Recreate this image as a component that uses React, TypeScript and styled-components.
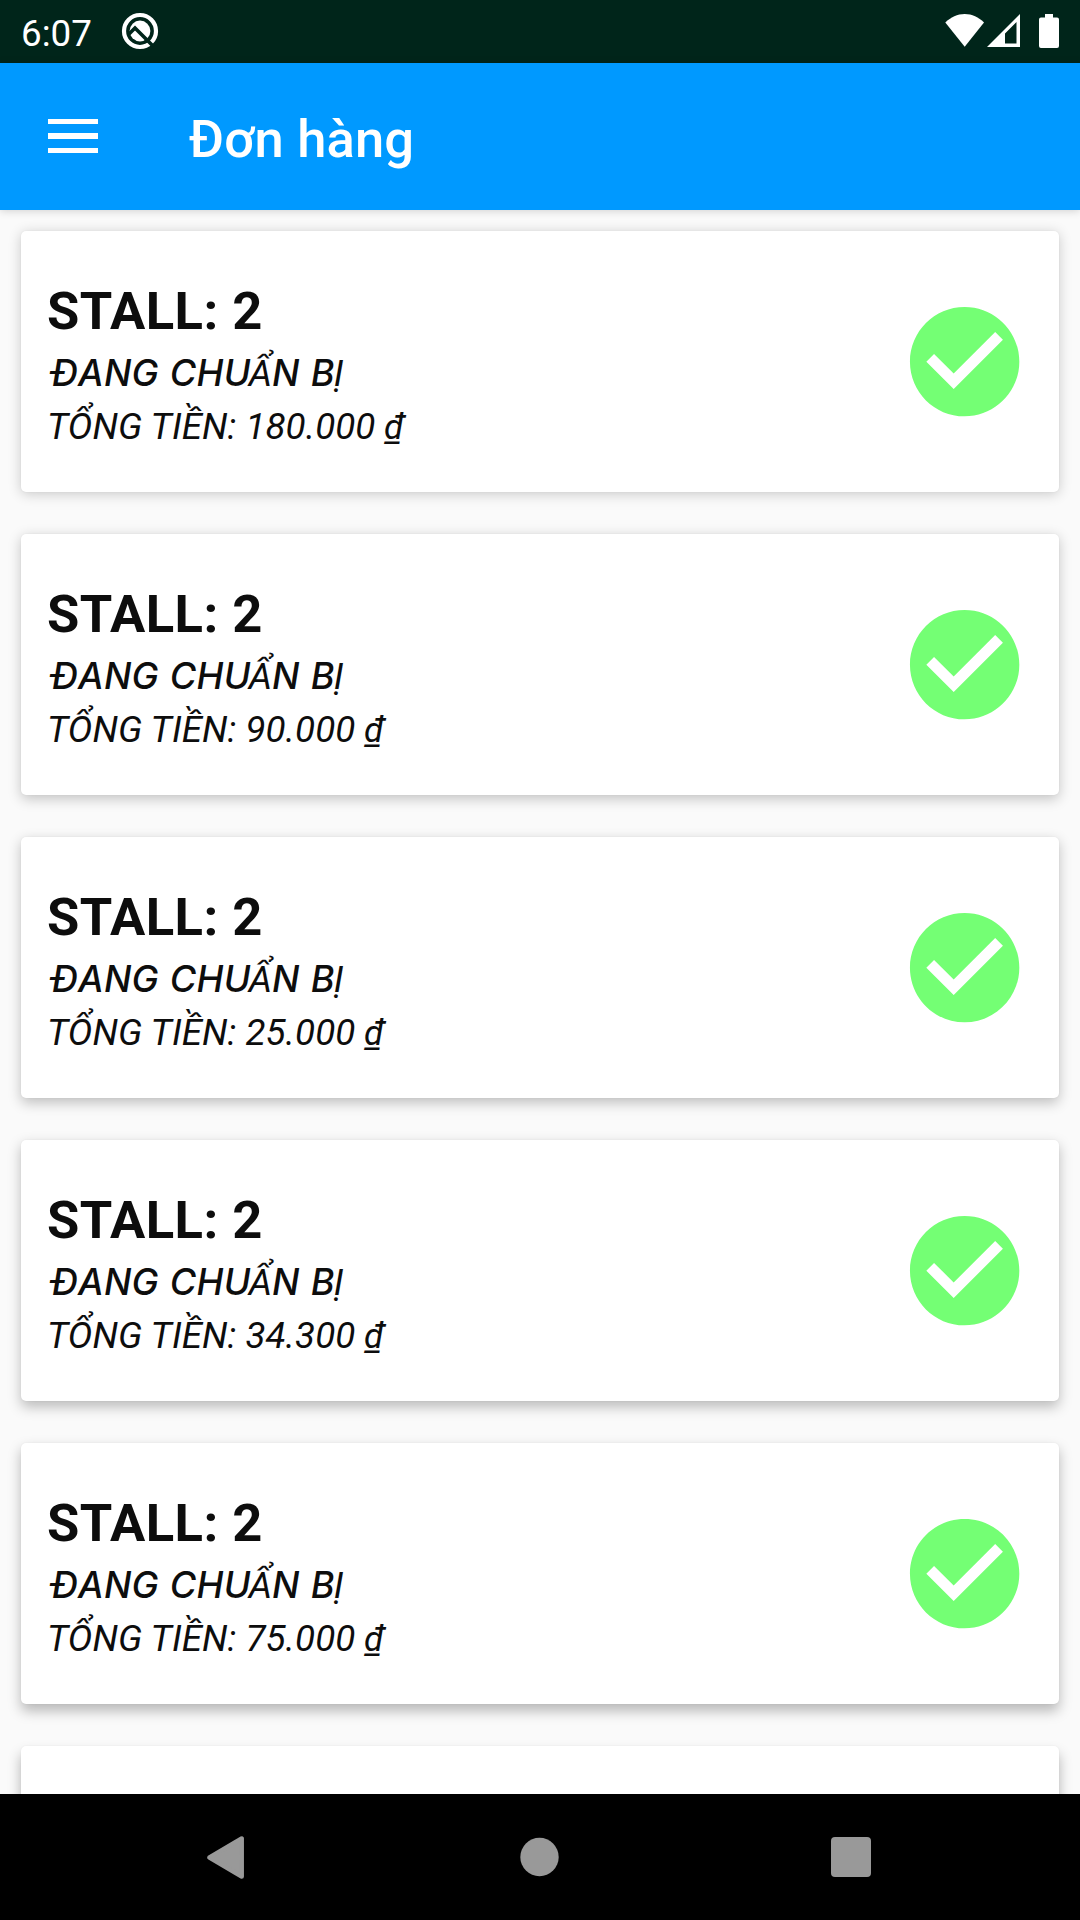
import React from "react";
import styled, { createGlobalStyle } from "styled-components";

const GlobalStyle = createGlobalStyle`
  * { box-sizing: border-box; }
  html, body { margin: 0; padding: 0; overflow: hidden; }
  body { font-family: Roboto, "Noto Sans", sans-serif; background: #fafafa; }
  svg { display: block; }
`;

const Screen = styled.div`
  width: 1080px;
  height: 1920px;
  display: flex;
  flex-direction: column;
  overflow: hidden;
  background: #fafafa;
`;

const StatusBar = styled.div`
  height: 63px;
  flex: none;
  display: flex;
  justify-content: space-between;
  background: #00251a;
  color: #fff;
`;

const StatusLeft = styled.div`
  display: flex;
  align-items: flex-start;
  gap: 29px;
  padding: 12px 0 0 21px;
`;

const Clock = styled.span`
  font-size: 36.75px;
  line-height: 43px;
`;

const StatusRight = styled.div`
  display: flex;
  align-items: flex-start;
  padding: 14px 21px 0 0;
`;

const Gap = styled.i<{ $w: number }>`
  width: ${(p) => p.$w}px;
`;

const AppBar = styled.header`
  height: 147px;
  flex: none;
  display: flex;
  align-items: flex-start;
  background: #0099ff;
  color: #fff;
  box-shadow: 0 1px 8px rgba(0, 0, 0, 0.17);
`;

const MenuButton = styled.button`
  display: flex;
  flex-direction: column;
  gap: 9px;
  width: 50px;
  margin: 56px 0 0 48px;
  padding: 0;
  border: 0;
  background: none;
`;

const MenuLine = styled.span`
  height: 5.25px;
  background: #fff;
`;

const Title = styled.h1`
  margin: 45px 0 0 91px;
  font-size: 52.5px;
  line-height: 62px;
  font-weight: 500;
  letter-spacing: 0.15px;
`;

const List = styled.main`
  flex: 1;
  min-height: 0;
  overflow: hidden;
  display: flex;
  flex-direction: column;
  gap: 42px;
  padding: 21px 21px 0;
`;

const Card = styled.article<{ $depth: number }>`
  height: 261px;
  flex: none;
  display: flex;
  justify-content: space-between;
  align-items: center;
  padding: 0 29px 0 26px;
  border-radius: 5px;
  background: #fff;
  box-shadow:
    0 ${(p) => 2 + p.$depth * 1.2}px 13px rgba(0, 0, 0, ${(p) => 0.2 + p.$depth * 0.018}),
    0 0 2px rgba(0, 0, 0, 0.06);
`;

const Info = styled.div`
  align-self: flex-start;
  padding-top: 49px;
  color: #0d0d0d;
  white-space: nowrap;
`;

const Stall = styled.h2`
  margin: 0 0 10px;
  font-size: 52.5px;
  line-height: 62px;
  font-weight: 700;
  letter-spacing: 0.45px;
`;

const State = styled.p`
  display: flex;
  align-items: baseline;
  height: 43px;
  margin: 0 0 10px;
  padding-left: 4px;
  font-family: Inter, Roboto, sans-serif;
  font-size: 36.2px;
  line-height: 43px;
  font-style: italic;
  font-weight: 550;
  letter-spacing: 0.2px;
  word-spacing: 1.2px;
  white-space: pre;
`;

const Accented = styled.span<{ $shift: number }>`
  margin-left: ${(p) => p.$shift}px;
  font-family: Roboto, sans-serif;
  font-size: 36.75px;
  font-weight: 400;
`;

const Total = styled.p`
  margin: 0;
  font-size: 36.75px;
  line-height: 43px;
  font-style: italic;
  letter-spacing: 0.06px;
`;

const Dong = styled.span`
  margin-left: -0.5px;
  font-size: 35px;
`;

const NavBar = styled.nav`
  height: 126px;
  flex: none;
  display: flex;
  align-items: center;
  justify-content: space-between;
  padding: 0 209px 0 207px;
  background: #000;
`;

const QIcon = () => (
  <svg width="38" height="38" viewBox="-19 -19 38 38">
    <circle r="16" fill="none" stroke="#fff" strokeWidth="4.2" />
    <circle r="10.4" fill="#fff" />
    <path d="M-11.500 3.500L-5-3L14 16" fill="none" stroke="#00251a" strokeWidth="3.600" />
  </svg>
);

const WifiIcon = () => (
  <svg width="40" height="34" viewBox="0 0 40 34">
    <path d="M.3 8.6C5.8 3 12.4 0 19.7 0S33.600 3 39 8.600L19.700 32.800Z" fill="#fff" />
  </svg>
);

const SignalIcon = () => (
  <svg width="33" height="33" viewBox="0 0 33 33">
    <path fillRule="evenodd" d="M0 33L33 0V33ZM18 19.500V29.500H29.500V8Z" fill="#fff" />
  </svg>
);

const BatteryIcon = () => (
  <svg width="20" height="34" viewBox="0 0 20 34">
    <path
      d="M6 0H14V3.500H18Q20 3.500 20 5.500V32Q20 34 18 34H2Q0 34 0 32V5.500Q0 3.500 2 3.500H6Z"
      fill="#fff"
    />
  </svg>
);

const CheckIcon = () => (
  <svg width="131.25" height="131.25" viewBox="0 0 24 24">
    <path
      d="M12 2C6.480 2 2 6.480 2 12s4.480 10 10 10 10-4.480 10-10S17.520 2 12 2zm-2 15l-5-5 1.410-1.410L10 14.170l7.590-7.590L19 8l-9 9z"
      fill="#74ff74"
    />
  </svg>
);

const BackIcon = () => (
  <svg width="38" height="43" viewBox="0 0 38 43">
    <path d="M2.500 21.500L34.700 2.500V40.500Z" fill="#999" stroke="#999" strokeWidth="4.500" strokeLinejoin="round" />
  </svg>
);

const HomeIcon = () => (
  <svg width="42" height="40" viewBox="0 0 42 40">
    <circle cx="22.500" cy="20" r="19.200" fill="#999" />
  </svg>
);

const RecentsIcon = () => (
  <svg width="40" height="40" viewBox="0 0 40 40">
    <rect width="40" height="40" rx="4" fill="#999" />
  </svg>
);

const totals = ["180.000", "90.000", "25.000", "34.300", "75.000", "60.000"];

export default function App() {
  return (
    <>
      <GlobalStyle />
      <Screen>
        <StatusBar>
          <StatusLeft>
            <Clock>6:07</Clock>
            <QIcon />
          </StatusLeft>
          <StatusRight>
            <WifiIcon />
            <Gap $w={2} />
            <SignalIcon />
            <Gap $w={19} />
            <BatteryIcon />
          </StatusRight>
        </StatusBar>
        <AppBar>
          <MenuButton aria-label="Menu">
            <MenuLine />
            <MenuLine />
            <MenuLine />
          </MenuButton>
          <Title>Đơn hàng</Title>
        </AppBar>
        <List>
          {totals.map((total, i) => (
            <Card key={i} $depth={i}>
              {i < 5 && (
                <>
                  <Info>
                    <Stall>STALL: 2</Stall>
                    <State>
                      <span>ĐANG CHU</span>
                      <Accented $shift={-2}>Ẩ</Accented>
                      <span>N B</span>
                      <Accented $shift={-1}>Ị</Accented>
                    </State>
                    <Total>
                      TỔNG TIỀN: {total} <Dong>₫</Dong>
                    </Total>
                  </Info>
                  <CheckIcon />
                </>
              )}
            </Card>
          ))}
        </List>
        <NavBar>
          <BackIcon />
          <HomeIcon />
          <RecentsIcon />
        </NavBar>
      </Screen>
    </>
  );
}
